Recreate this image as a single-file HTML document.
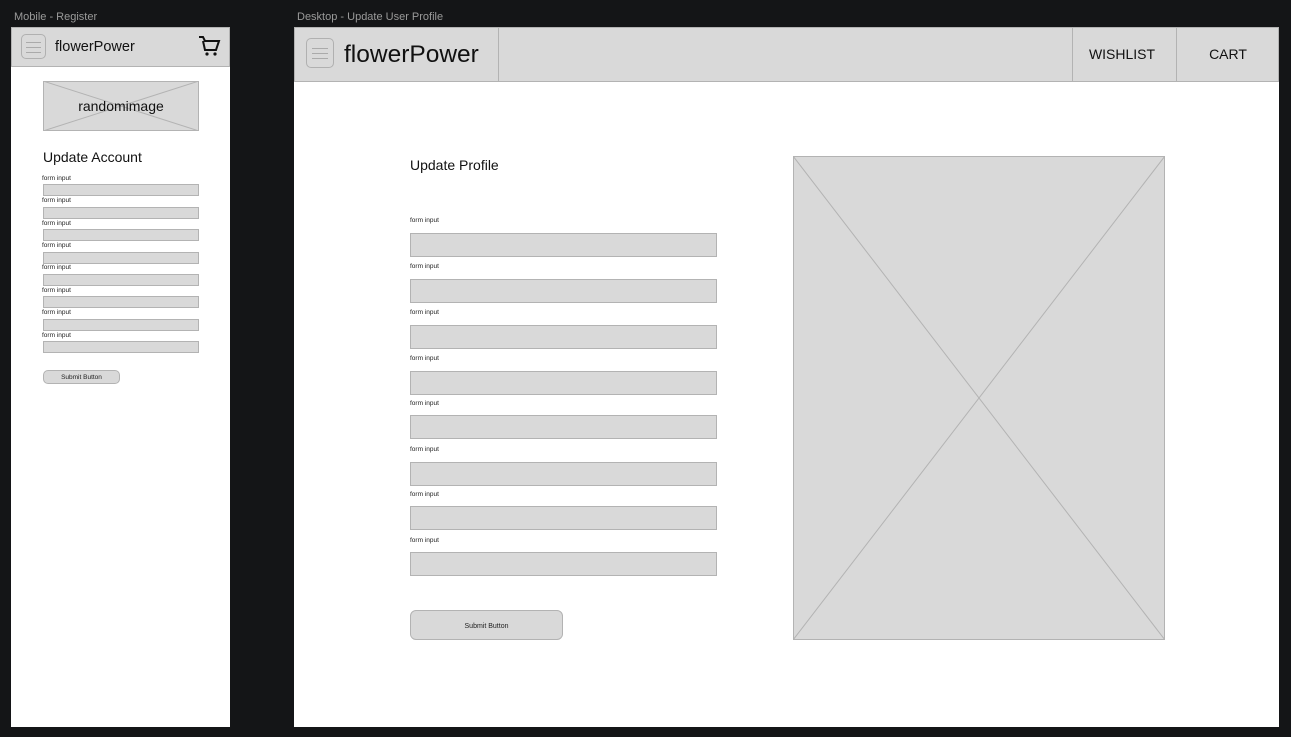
<!DOCTYPE html>
<html><head><meta charset="utf-8"><style>
*{margin:0;padding:0;box-sizing:border-box}
body{width:1291px;height:737px;background:#141517;position:relative;overflow:hidden;font-family:"Liberation Sans",sans-serif}
.a{position:absolute}
.cap{color:#9a9a9a;font-size:11px}
.g{background:#d9d9d9;border:1px solid #b3b3b3}
.t{color:#111;white-space:nowrap}
.lab{font-size:6.5px;color:#222}
.ham{border:1px solid #b0b0b0;border-radius:5px;background:#d9d9d9}
.ham i{position:absolute;left:18%;right:18%;height:1px;background:#aaa}
</style></head><body>
<div class="a cap" style="left:14px;top:11px">Mobile - Register</div>
<div class="a cap" style="left:297px;top:11px">Desktop - Update User Profile</div>

<!-- mobile -->
<div class="a" style="left:11px;top:27px;width:219px;height:700px;background:#fff"></div>
<div class="a g" style="left:11px;top:27px;width:219px;height:40px"></div>
<div class="a ham" style="left:21px;top:34px;width:25px;height:25px"><i style="top:7px"></i><i style="top:12px"></i><i style="top:17px"></i></div>
<div class="a t" style="left:55px;top:39px;font-size:14.5px">flowerPower</div>
<svg class="a" style="left:197px;top:35px" width="24" height="22" viewBox="0 0 24 22"><path d="M2 2h4l2 4h14l-3 9H8L6 6" fill="none" stroke="#111" stroke-width="2"/><circle cx="10" cy="19" r="1.6" fill="#111"/><circle cx="18" cy="19" r="1.6" fill="#111"/></svg>
<svg class="a" style="left:43px;top:81px" width="156" height="50"><rect x=".5" y=".5" width="155" height="49" fill="#d9d9d9" stroke="#b3b3b3"/><path d="M0 0L156 50M156 0L0 50" stroke="#b3b3b3"/></svg>
<div class="a t" style="left:43px;top:98px;width:156px;text-align:center;font-size:14px">randomimage</div>
<div class="a t" style="left:43px;top:149px;font-size:14px">Update Account</div>
<div class="a lab" style="left:42px;top:175px">form input</div><div class="a g" style="left:43px;top:184px;width:156px;height:12px"></div>
<div class="a lab" style="left:42px;top:197px">form input</div><div class="a g" style="left:43px;top:207px;width:156px;height:12px"></div>
<div class="a lab" style="left:42px;top:220px">form input</div><div class="a g" style="left:43px;top:229px;width:156px;height:12px"></div>
<div class="a lab" style="left:42px;top:242px">form input</div><div class="a g" style="left:43px;top:252px;width:156px;height:12px"></div>
<div class="a lab" style="left:42px;top:264px">form input</div><div class="a g" style="left:43px;top:274px;width:156px;height:12px"></div>
<div class="a lab" style="left:42px;top:287px">form input</div><div class="a g" style="left:43px;top:296px;width:156px;height:12px"></div>
<div class="a lab" style="left:42px;top:309px">form input</div><div class="a g" style="left:43px;top:319px;width:156px;height:12px"></div>
<div class="a lab" style="left:42px;top:332px">form input</div><div class="a g" style="left:43px;top:341px;width:156px;height:12px"></div>
<div class="a g" style="left:43px;top:370px;width:77px;height:14px;border-radius:5px;font-size:6.5px;text-align:center;line-height:14px;color:#222">Submit Button</div>

<!-- desktop -->
<div class="a" style="left:294px;top:27px;width:985px;height:700px;background:#fff"></div>
<div class="a g" style="left:294px;top:27px;width:985px;height:55px"></div>
<div class="a" style="left:498px;top:27px;width:1px;height:54px;background:#b3b3b3"></div>
<div class="a" style="left:1072px;top:27px;width:1px;height:54px;background:#b3b3b3"></div>
<div class="a" style="left:1176px;top:27px;width:1px;height:54px;background:#b3b3b3"></div>
<div class="a ham" style="left:306px;top:38px;width:28px;height:30px"><i style="top:9px"></i><i style="top:14px"></i><i style="top:19px"></i></div>
<div class="a t" style="left:344px;top:41px;font-size:24.5px">flowerPower</div>
<div class="a t" style="left:1073px;top:46px;width:98px;text-align:center;font-size:14px">WISHLIST</div>
<div class="a t" style="left:1177px;top:46px;width:102px;text-align:center;font-size:14px">CART</div>
<div class="a t" style="left:410px;top:157px;font-size:14px">Update Profile</div>
<div class="a lab" style="left:410px;top:217px">form input</div><div class="a g" style="left:410px;top:233px;width:307px;height:24px"></div>
<div class="a lab" style="left:410px;top:263px">form input</div><div class="a g" style="left:410px;top:279px;width:307px;height:24px"></div>
<div class="a lab" style="left:410px;top:309px">form input</div><div class="a g" style="left:410px;top:325px;width:307px;height:24px"></div>
<div class="a lab" style="left:410px;top:355px">form input</div><div class="a g" style="left:410px;top:371px;width:307px;height:24px"></div>
<div class="a lab" style="left:410px;top:400px">form input</div><div class="a g" style="left:410px;top:415px;width:307px;height:24px"></div>
<div class="a lab" style="left:410px;top:446px">form input</div><div class="a g" style="left:410px;top:462px;width:307px;height:24px"></div>
<div class="a lab" style="left:410px;top:491px">form input</div><div class="a g" style="left:410px;top:506px;width:307px;height:24px"></div>
<div class="a lab" style="left:410px;top:537px">form input</div><div class="a g" style="left:410px;top:552px;width:307px;height:24px"></div>
<div class="a g" style="left:410px;top:610px;width:153px;height:30px;border-radius:6px;font-size:7px;text-align:center;line-height:31px;color:#222">Submit Button</div>
<svg class="a" style="left:793px;top:156px" width="372" height="484"><rect x=".5" y=".5" width="371" height="483" fill="#d9d9d9" stroke="#b3b3b3"/><path d="M0 0L372 484M372 0L0 484" stroke="#b3b3b3"/></svg>
</body></html>
